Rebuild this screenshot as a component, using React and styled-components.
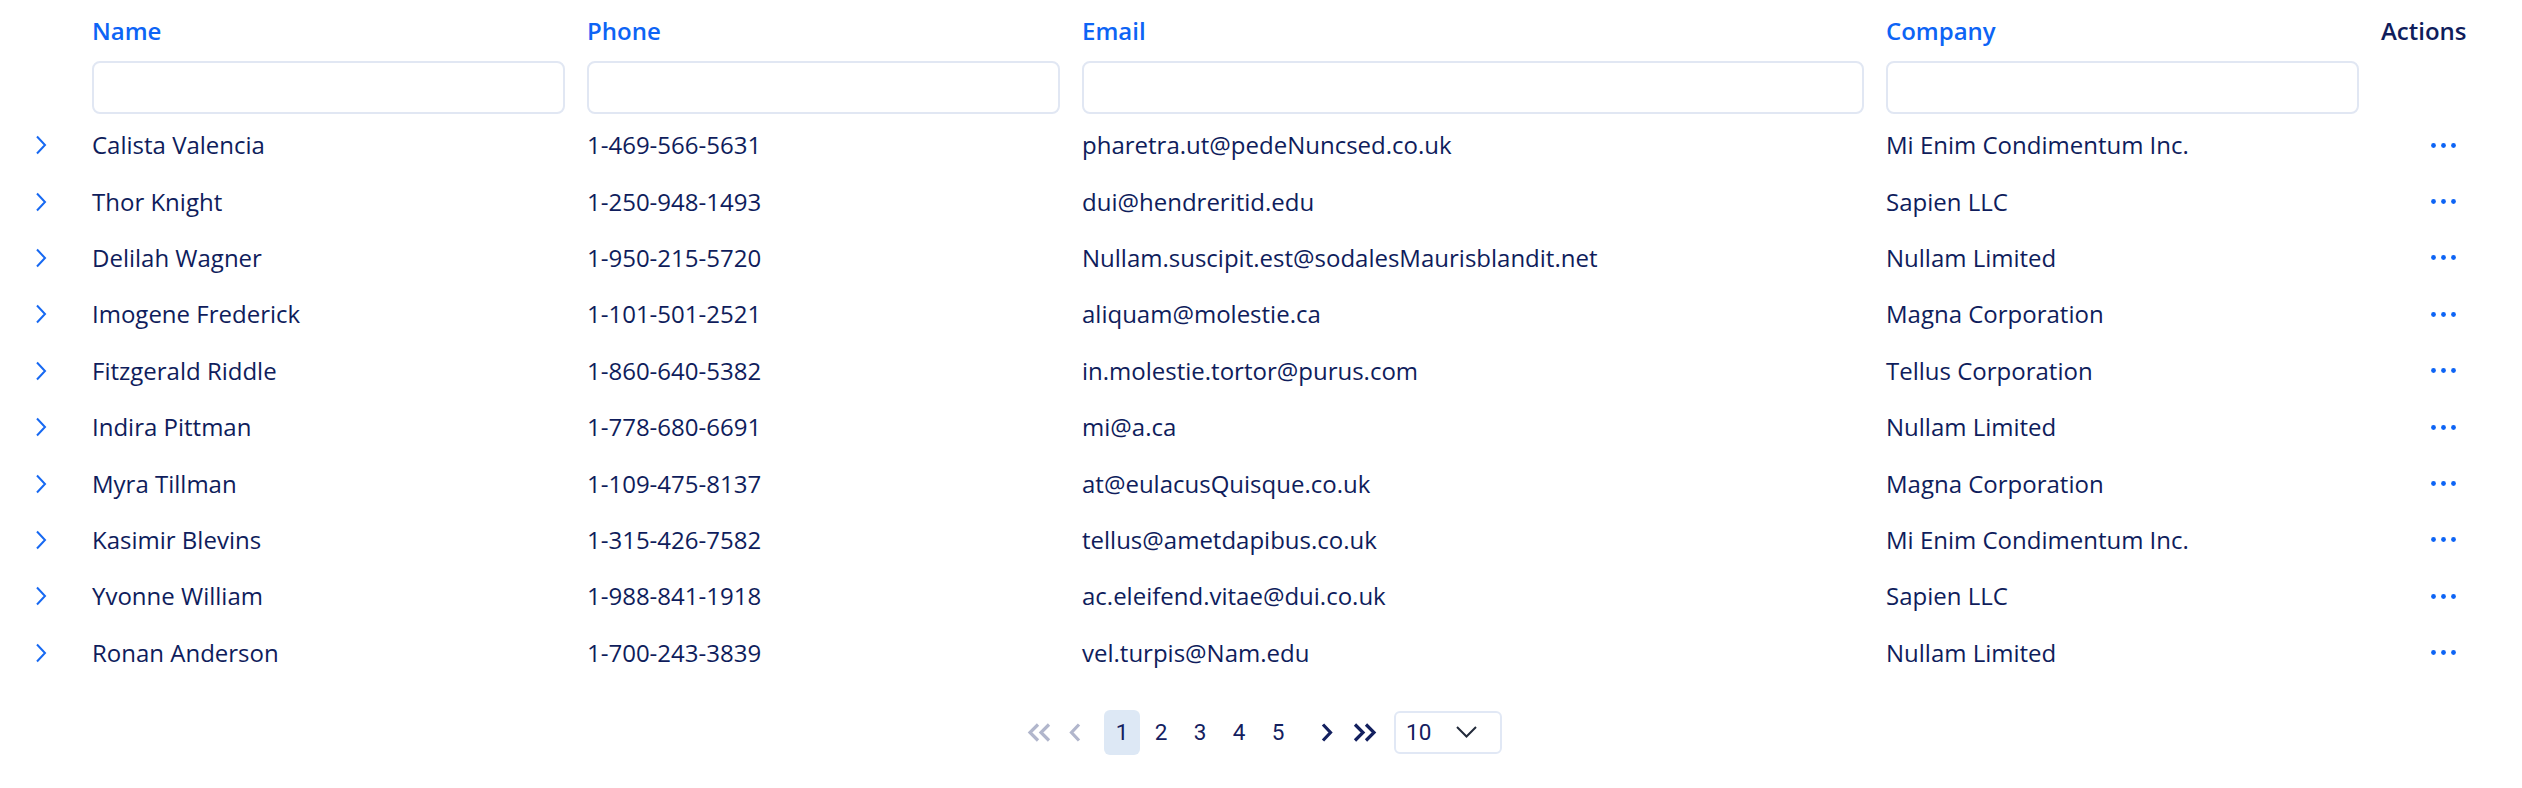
import React from 'react'
import styled, { createGlobalStyle } from 'styled-components'

const GlobalStyle = createGlobalStyle`
  body {
    margin: 0;
    background: #fff;
    font-family: "Open Sans", "Noto Sans", sans-serif;
    color: #0f1d5c;
  }
`

const people = [
    ['Calista Valencia', '1-469-566-5631', 'pharetra.ut@pedeNuncsed.co.uk', 'Mi Enim Condimentum Inc.'],
    ['Thor Knight', '1-250-948-1493', 'dui@hendreritid.edu', 'Sapien LLC'],
    ['Delilah Wagner', '1-950-215-5720', 'Nullam.suscipit.est@sodalesMaurisblandit.net', 'Nullam Limited'],
    ['Imogene Frederick', '1-101-501-2521', 'aliquam@molestie.ca', 'Magna Corporation'],
    ['Fitzgerald Riddle', '1-860-640-5382', 'in.molestie.tortor@purus.com', 'Tellus Corporation'],
    ['Indira Pittman', '1-778-680-6691', 'mi@a.ca', 'Nullam Limited'],
    ['Myra Tillman', '1-109-475-8137', 'at@eulacusQuisque.co.uk', 'Magna Corporation'],
    ['Kasimir Blevins', '1-315-426-7582', 'tellus@ametdapibus.co.uk', 'Mi Enim Condimentum Inc.'],
    ['Yvonne William', '1-988-841-1918', 'ac.eleifend.vitae@dui.co.uk', 'Sapien LLC'],
    ['Ronan Anderson', '1-700-243-3839', 'vel.turpis@Nam.edu', 'Nullam Limited'],
]

const columns = ['Name', 'Phone', 'Email', 'Company']

function App() {
    return (
        <>
            <GlobalStyle />
            <Wrapper>
                <HeadRow>
                    <span />
                    {columns.map(c => <HeadLabel key={c}>{c}</HeadLabel>)}
                    <HeadLabel dark>Actions</HeadLabel>
                </HeadRow>
                <FilterRow>
                    <span />
                    {columns.map(c => <Filter key={c} />)}
                    <span />
                </FilterRow>
                <Body>
                    {people.map(p => (
                        <DataRow key={p[0]}>
                            <Expander>
                                <svg width="12" height="20" viewBox="0 0 12 20">
                                    <polyline points="2,1.5 10,10 2,18.5" fill="none" stroke="#1769f2" strokeWidth="2" />
                                </svg>
                            </Expander>
                            {p.map((v, i) => <Cell key={i}>{v}</Cell>)}
                            <ActionCell>
                                <svg width="25" height="5" viewBox="0 0 25 5">
                                    <circle cx="2.5" cy="2.5" r="2.4" fill="#0d64f5" />
                                    <circle cx="12.5" cy="2.5" r="2.4" fill="#0d64f5" />
                                    <circle cx="22.5" cy="2.5" r="2.4" fill="#0d64f5" />
                                </svg>
                            </ActionCell>
                        </DataRow>
                    ))}
                </Body>
                <Pager>
                    <ArrowBtn>
                        <svg width="25" height="19" viewBox="0 0 25 19">
                            <polyline points="11,1.5 3,9.5 11,17.5" fill="none" stroke="#b1b6cc" strokeWidth="3.2" />
                            <polyline points="22,1.5 14,9.5 22,17.5" fill="none" stroke="#b1b6cc" strokeWidth="3.2" />
                        </svg>
                    </ArrowBtn>
                    <ArrowBtn gap={2}>
                        <svg width="12" height="19" viewBox="0 0 12 19">
                            <polyline points="10,1.5 2.5,9.5 10,17.5" fill="none" stroke="#b1b6cc" strokeWidth="3.2" />
                        </svg>
                    </ArrowBtn>
                    <Pages>
                        {[1, 2, 3, 4, 5].map(n => <PageBtn key={n} active={n === 1}>{n}</PageBtn>)}
                    </Pages>
                    <ArrowBtn gap={14}>
                        <svg width="12" height="19" viewBox="0 0 12 19">
                            <polyline points="2,1.5 9.5,9.5 2,17.5" fill="none" stroke="#13205f" strokeWidth="3.2" />
                        </svg>
                    </ArrowBtn>
                    <ArrowBtn gap={3}>
                        <svg width="25" height="19" viewBox="0 0 25 19">
                            <polyline points="3,1.5 11,9.5 3,17.5" fill="none" stroke="#13205f" strokeWidth="3.2" />
                            <polyline points="14,1.5 22,9.5 14,17.5" fill="none" stroke="#13205f" strokeWidth="3.2" />
                        </svg>
                    </ArrowBtn>
                    <SizeSelect>
                        <span>10</span>
                        <svg width="21" height="12" viewBox="0 0 21 12">
                            <polyline points="1,1 10.5,10.5 20,1" fill="none" stroke="#222a3a" strokeWidth="2" />
                        </svg>
                    </SizeSelect>
                </Pager>
            </Wrapper>
        </>
    )
}

export default App

const Wrapper = styled.div`
width: 2522px;
`

const Grid = styled.div`
display: grid;
grid-template-columns: 70px 473px 473px 782px 473px 1fr;
column-gap: 22px;
align-items: center;
`

const HeadRow = styled(Grid)`
padding-top: 16px;
`

const HeadLabel = styled.div`
font-size: 24px;
line-height: 30px;
font-weight: 600;
color: ${p => p.dark ? '#0f1d5c' : '#0d64f5'};
`

const FilterRow = styled(Grid)`
margin-top: 15px;
`

const Filter = styled.input`
box-sizing: border-box;
width: 100%;
height: 53px;
border: 2px solid #e1e7f3;
border-radius: 8px;
background: #fff;
outline: none;
`

const Body = styled.div`
margin-top: 3px;
`

const DataRow = styled(Grid)`
height: 56.4px;
`

const Expander = styled.div`
display: flex;
align-items: center;
padding-left: 35px;
`

const Cell = styled.div`
font-size: 24px;
line-height: 1;
white-space: nowrap;
`

const ActionCell = styled.div`
display: flex;
justify-content: center;
padding-right: 16px;
`

const Pager = styled.div`
display: flex;
align-items: center;
justify-content: center;
margin-top: 29px;
padding-left: 2px;
font-family: Roboto, "Open Sans", sans-serif;
`

const ArrowBtn = styled.div`
width: 34px;
height: 45px;
display: flex;
align-items: center;
justify-content: center;
margin-left: ${p => p.gap || 0}px;
`

const Pages = styled.div`
display: flex;
gap: 3px;
margin-left: 12px;
`

const PageBtn = styled.div`
width: 36px;
height: 45px;
border-radius: 6px;
display: flex;
align-items: center;
justify-content: center;
font-size: 22.5px;
color: #13205f;
background: ${p => p.active ? '#dde8f5' : 'transparent'};
`

const SizeSelect = styled.div`
box-sizing: border-box;
width: 108px;
height: 43px;
margin-left: 13px;
border: 2px solid #e1e8f5;
border-radius: 6px;
display: flex;
align-items: center;
justify-content: space-between;
padding: 0 23px 0 10px;
font-size: 22.5px;
color: #13205f;
`
